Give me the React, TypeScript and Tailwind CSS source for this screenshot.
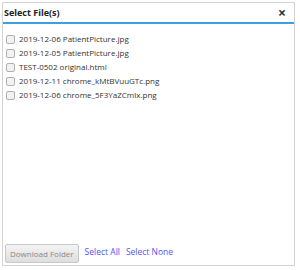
import React from "react";

const files = [
  "2019-12-06 PatientPicture.jpg",
  "2019-12-05 PatientPicture.jpg",
  "TEST-0502 original.html",
  "2019-12-11 chrome_kMtBVuuGTc.png",
  "2019-12-06 chrome_5F3YaZCmlx.png",
];

export default function App() {
  return (
    <div className="w-[300px] h-[270px] bg-white p-[2px]" style={{ fontFamily: '"Open Sans", sans-serif' }}>
      <div className="w-[293px] h-[264px] border border-[#d4d4d4] flex flex-col">
        <div className="h-[21px] flex items-center justify-between pl-[1px] border-b-2 border-[#3b9fe0]">
          <span className="text-[9px] font-bold text-[#222]">Select File(s)</span>
          <span className="text-[14px] font-bold text-[#333] mr-[8px] leading-none">×</span>
        </div>
        <div className="flex flex-col pt-[9px] pl-[3px] gap-[2px]">
          {files.map((f) => (
            <label key={f} className="flex items-center h-[12px] text-[8px] text-[#333]">
              <span className="w-[9px] h-[9px] border border-[#b0b0b0] rounded-[2px] bg-[#f2f2f2] mr-[4px]"></span>
              {f}
            </label>
          ))}
        </div>
        <div className="flex-1" />
        <div className="flex items-center px-[2px] pb-[2px] gap-[6px]">
          <button className="h-[19px] px-[4px] border border-[#c8c8c8] rounded-[2px] bg-gradient-to-b from-[#f4f4f4] to-[#dedede] text-[8px] text-[#888]">
            Download Folder
          </button>
          <span className="text-[8.5px] text-[#5454f0] -mt-[2px]">Select All</span>
          <span className="text-[8.5px] text-[#5454f0] -mt-[2px]">Select None</span>
        </div>
      </div>
    </div>
  );
}
